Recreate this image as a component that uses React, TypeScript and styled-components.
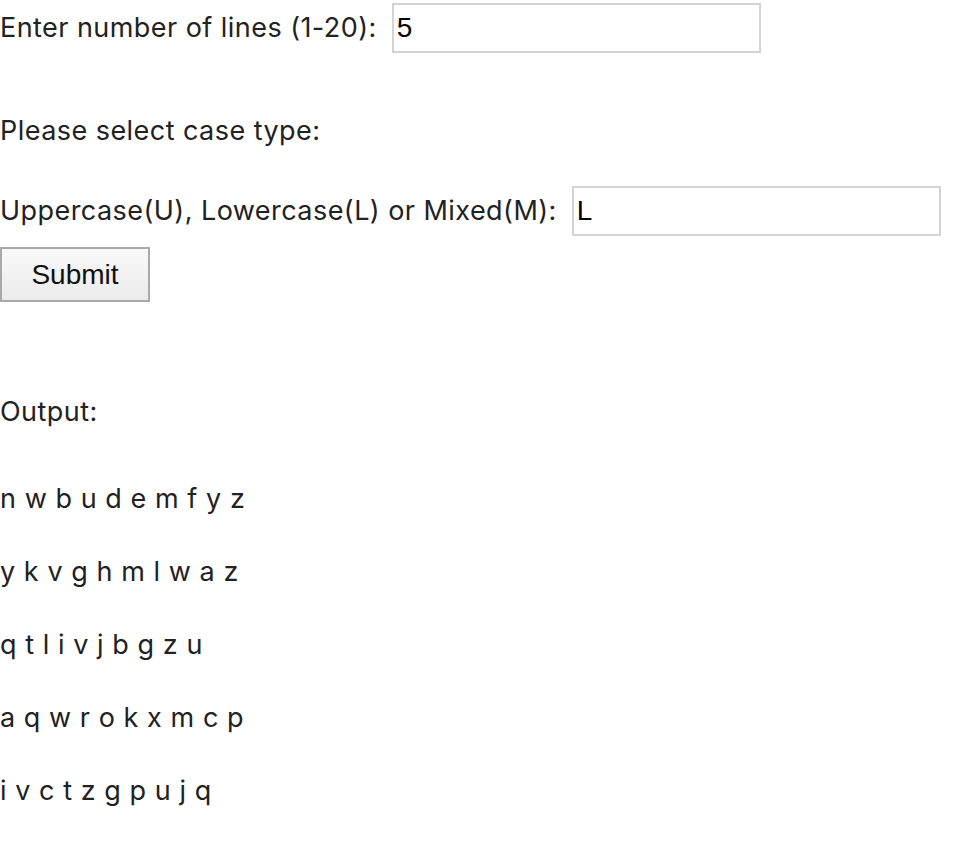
import React from "react";
import styled, { createGlobalStyle } from "styled-components";

const Global = createGlobalStyle`
  html, body { margin: 0; padding: 0; background: #fff; }
  body { font-family: Inter, "Noto Sans", sans-serif; color: #222; }
`;

const Page = styled.div`
  display: flex;
  flex-direction: column;
  align-items: flex-start;
  padding-top: 3px;
`;

const Row = styled.div<{ $mt?: number }>`
  display: flex;
  align-items: center;
  gap: 15px;
  margin-top: ${(p) => p.$mt ?? 0}px;
`;

const Label = styled.span`
  font-size: 27px;
  line-height: 30px;
  letter-spacing: 0.45px;
`;

const Text = styled.div<{ $mt?: number }>`
  font-size: 27px;
  line-height: 30px;
  letter-spacing: 0.45px;
  margin-top: ${(p) => p.$mt ?? 0}px;
`;

const Field = styled.input`
  box-sizing: border-box;
  width: 369px;
  height: 50px;
  border: 2px solid #d3d3d3;
  padding: 0 3px;
  font-family: "Liberation Sans", Arial, sans-serif;
  font-size: 28px;
  color: #000;
  background: #fff;
  outline: none;
`;

const Button = styled.button<{ $mt?: number }>`
  box-sizing: border-box;
  width: 150px;
  height: 55px;
  margin-top: ${(p) => p.$mt ?? 0}px;
  border: 2px solid #a9a9a9;
  background: linear-gradient(#f9f9f9, #ebebeb);
  font-family: "Liberation Sans", Arial, sans-serif;
  font-size: 28px;
  color: #111;
  padding: 0;
`;

const Output = styled.div`
  display: flex;
  flex-direction: column;
  gap: 43px;
  margin-top: 57px;
`;

const Line = styled.div`
  font-size: 27px;
  line-height: 30px;
  letter-spacing: 0.55px;
`;

const lines = [
  "n w b u d e m f y z",
  "y k v g h m l w a z",
  "q t l i v j b g z u",
  "a q w r o k x m c p",
  "i v c t z g p u j q",
];

export default function App() {
  return (
    <>
      <Global />
      <Page>
        <Row>
          <Label>Enter number of lines (1-20):</Label>
          <Field defaultValue="5" />
        </Row>
        <Text $mt={63}>Please select case type:</Text>
        <Row $mt={40}>
          <Label>Uppercase(U), Lowercase(L) or Mixed(M):</Label>
          <Field defaultValue="L" />
        </Row>
        <Button $mt={11}>Submit</Button>
        <Text $mt={95}>Output:</Text>
        <Output>
          {lines.map((l, i) => (
            <Line key={i}>{l}</Line>
          ))}
        </Output>
      </Page>
    </>
  );
}
